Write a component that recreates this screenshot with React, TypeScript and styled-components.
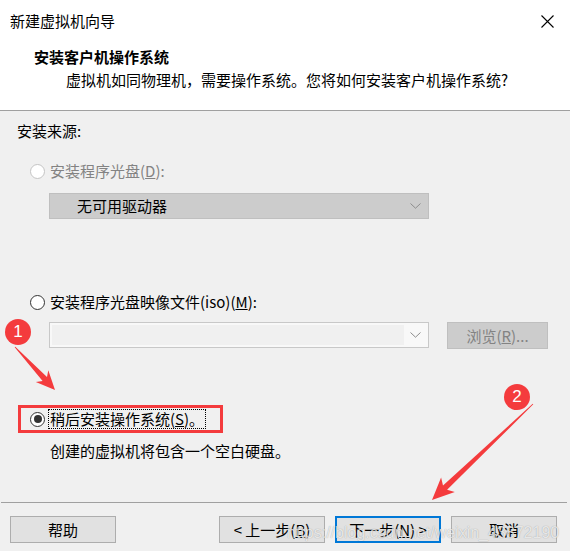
import React from 'react';
import styled, { createGlobalStyle } from 'styled-components';

const GlobalStyle = createGlobalStyle`
  html, body {
    margin: 0;
    padding: 0;
    background: #f0f0f0;
  }
  body {
    font-family: "Noto Sans CJK SC", "Noto Sans", sans-serif;
    color: #000;
  }
`;

const RED = '#f43b3d';

type Pt = [number, number];

// tapered arrow like the snipping tool draws: thin at the tail, wide near the head
const arrowPoints = (tail: Pt, tip: Pt, headLen: number, headW: number, shaftW: number) => {
  const dx = tip[0] - tail[0];
  const dy = tip[1] - tail[1];
  const len = Math.hypot(dx, dy);
  const d = [dx / len, dy / len];
  const n = [-d[1], d[0]];
  const base = [tip[0] - d[0] * headLen, tip[1] - d[1] * headLen];
  const barb = [tip[0] - d[0] * (headLen + 4), tip[1] - d[1] * (headLen + 4)];
  const p = (x: number, y: number) => `${x.toFixed(1)},${y.toFixed(1)}`;
  return [
    p(tail[0] + n[0] * 0.4, tail[1] + n[1] * 0.4),
    p(base[0] + n[0] * shaftW / 2, base[1] + n[1] * shaftW / 2),
    p(barb[0] + n[0] * headW / 2, barb[1] + n[1] * headW / 2),
    p(tip[0], tip[1]),
    p(barb[0] - n[0] * headW / 2, barb[1] - n[1] * headW / 2),
    p(base[0] - n[0] * shaftW / 2, base[1] - n[1] * shaftW / 2),
    p(tail[0] - n[0] * 0.4, tail[1] - n[1] * 0.4),
  ].join(' ');
};

const App = () => {
  return (
    <Window>
      <GlobalStyle />
      <Header>
        <TitleBar>
          <span>新建虚拟机向导</span>
          <svg width="13" height="13" viewBox="0 0 13 13">
            <path d="M0.5 0.5 L12.5 12.5 M12.5 0.5 L0.5 12.5" stroke="#000" strokeWidth="1.1" />
          </svg>
        </TitleBar>
        <Heading>安装客户机操作系统</Heading>
        <SubHeading>虚拟机如同物理机，需要操作系统。您将如何安装客户机操作系统?</SubHeading>
      </Header>

      <Body>
        <SectionLabel>安装来源:</SectionLabel>

        <RadioRow $disabled $top={20}>
          <RadioCircle $disabled />
          <span>
            安装程序光盘(<u>D</u>):
          </span>
        </RadioRow>
        <Combo $disabled $top={12}>
          <ComboText>无可用驱动器</ComboText>
          <Chevron />
        </Combo>

        <RadioRow $top={73}>
          <RadioCircle />
          <span>
            安装程序光盘映像文件(iso)(<u>M</u>):
          </span>
        </RadioRow>
        <FileRow>
          <Combo>
            <ComboField />
            <Chevron />
          </Combo>
          <BrowseButton>
            浏览(<u>R</u>)...
          </BrowseButton>
        </FileRow>

        <HighlightBox>
          <RadioCircle $checked />
          <FocusLabel>
            稍后安装操作系统(<u>S</u>)。
          </FocusLabel>
        </HighlightBox>
        <Description>创建的虚拟机将包含一个空白硬盘。</Description>
      </Body>

      <Footer>
        <Rule />
        <ButtonRow>
          <Button>帮助</Button>
          <Spacer />
          <Button>
            &lt; 上一步(<u>B</u>)
          </Button>
          <Button $primary>
            下一步(<u>N</u>) &gt;
          </Button>
          <Button>取消</Button>
        </ButtonRow>
      </Footer>

      <Annotations width="570" height="551" viewBox="0 0 570 551">
        <polygon points={arrowPoints([15, 347], [55, 390], 15, 17, 6)} fill={RED} />
        <polygon points={arrowPoints([533, 404], [432, 500], 18, 20, 6)} fill={RED} />
      </Annotations>
      <Badge style={{ left: 5, top: 319 }}>1</Badge>
      <Badge style={{ left: 504, top: 384 }}>2</Badge>
      <Watermark>https://blog.csdn.net/weixin_43872190</Watermark>
    </Window>
  );
};

const Chevron = () => (
  <ChevronBox>
    <svg width="11" height="6" viewBox="0 0 11 6">
      <path d="M0.5 0.5 L5.5 5.2 L10.5 0.5" fill="none" stroke="#8c8c8c" strokeWidth="1" />
    </svg>
  </ChevronBox>
);

const Window = styled.div`
  position: relative;
  width: 570px;
  height: 551px;
  overflow: hidden;
  background: #f0f0f0;
  display: flex;
  flex-direction: column;
  font-size: 15px;
  line-height: 20px;
`;

const Header = styled.header`
  background: #fff;
  height: 110px;
  border-bottom: 1px solid #a0a0a0;
  flex: none;
`;

const TitleBar = styled.div`
  height: 42px;
  display: flex;
  align-items: center;
  justify-content: space-between;
  padding: 0 16px 0 10px;
  svg {
    display: block;
  }
`;

const Heading = styled.div`
  margin-top: 5px;
  padding-left: 34px;
  font-weight: 700;
`;

const SubHeading = styled.div`
  margin-top: 3px;
  padding-left: 66px;
`;

const Body = styled.main`
  padding: 10px 0 0 17px;
  display: flex;
  flex-direction: column;
  align-items: flex-start;
`;

const SectionLabel = styled.div``;

const RadioRow = styled.div<{ $disabled?: boolean; $top: number }>`
  display: flex;
  align-items: center;
  gap: 5px;
  margin: ${(p) => p.$top}px 0 0 13px;
  color: ${(p) => (p.$disabled ? '#838383' : '#000')};
`;

const RadioCircle = styled.span<{ $checked?: boolean; $disabled?: boolean }>`
  flex: none;
  box-sizing: border-box;
  width: 15px;
  height: 15px;
  border-radius: 50%;
  border: 1px solid ${(p) => (p.$disabled ? '#c4c4c4' : '#333')};
  background: #fff;
  display: flex;
  align-items: center;
  justify-content: center;
  &::after {
    content: '';
    display: ${(p) => (p.$checked ? 'block' : 'none')};
    width: 8px;
    height: 8px;
    border-radius: 50%;
    background: #333;
  }
`;

const Combo = styled.div<{ $disabled?: boolean; $top?: number }>`
  box-sizing: border-box;
  width: 380px;
  height: 26px;
  margin: ${(p) => p.$top ?? 0}px 0 0 ${(p) => (p.$top !== undefined ? 32 : 0)}px;
  display: flex;
  align-items: stretch;
  background: ${(p) => (p.$disabled ? '#cccccc' : '#f8f8f8')};
  border: 1px solid ${(p) => (p.$disabled ? '#bfbfbf' : '#c8c8c8')};
`;

const ComboText = styled.div`
  flex: 1;
  padding-left: 27px;
  display: flex;
  align-items: center;
`;

const ComboField = styled.div`
  flex: 1;
  margin: 2px 0 2px 2px;
  background: #f0f0f0;
`;

const ChevronBox = styled.div`
  width: 22px;
  flex: none;
  display: flex;
  align-items: center;
  justify-content: center;
  padding-right: 2px;
`;

const FileRow = styled.div`
  display: flex;
  gap: 18px;
  margin: 10px 0 0 32px;
`;

const BrowseButton = styled.div`
  box-sizing: border-box;
  width: 101px;
  height: 27px;
  background: #cccccc;
  border: 1px solid #bfbfbf;
  color: #838383;
  display: flex;
  align-items: center;
  justify-content: center;
`;

const HighlightBox = styled.div`
  box-sizing: border-box;
  width: 205px;
  height: 28px;
  margin: 56px 0 0 1px;
  padding-left: 9px;
  border: 3px solid ${RED};
  display: flex;
  align-items: center;
  gap: 3px;
`;

const FocusLabel = styled.span`
  border: 1px dotted #000;
  padding: 0 1px;
  line-height: 18px;
`;

const Description = styled.div`
  margin: 8px 0 0 33px;
`;

const Footer = styled.footer`
  margin-top: auto;
  flex: none;
`;

const Rule = styled.div`
  height: 1px;
  margin: 0 3px 0 1px;
  background: #a0a0a0;
`;

const ButtonRow = styled.div`
  display: flex;
  padding: 13px 13px 8px 10px;
  gap: 10px;
`;

const Spacer = styled.div`
  flex: 1;
`;

const Button = styled.div<{ $primary?: boolean }>`
  box-sizing: border-box;
  width: 106px;
  height: 27px;
  background: #e1e1e1;
  border: ${(p) => (p.$primary ? '2px solid #0078d7' : '1px solid #adadad')};
  display: flex;
  align-items: center;
  justify-content: center;
`;

const Annotations = styled.svg`
  position: absolute;
  left: 0;
  top: 0;
  pointer-events: none;
`;

const Badge = styled.div`
  position: absolute;
  width: 26px;
  height: 26px;
  border-radius: 50%;
  background: ${RED};
  color: #fff;
  font-family: "Liberation Sans", Arial, sans-serif;
  font-size: 17px;
  line-height: 26px;
  text-align: center;
`;

const Watermark = styled.div`
  position: absolute;
  left: 287px;
  top: 523px;
  font-family: "Liberation Sans", Arial, sans-serif;
  font-size: 16px;
  line-height: 20px;
  color: rgba(255, 255, 255, 0.75);
  text-shadow: 0 0 1px rgba(0, 0, 0, 0.35);
  pointer-events: none;
  white-space: nowrap;
`;

export default App;
